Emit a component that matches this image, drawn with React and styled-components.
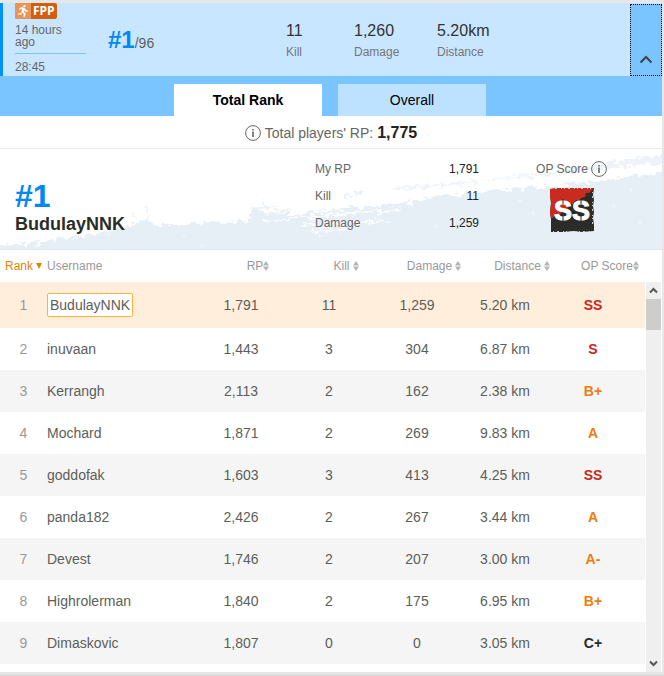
import React from 'react';
import styled, { createGlobalStyle } from 'styled-components';
import { FaRunning } from 'react-icons/fa';

const GlobalStyle = createGlobalStyle`
  * {
    box-sizing: border-box;
  }

  body {
    margin: 0;
    background-color: #e7e7e7;
    font-family: "Liberation Sans", Arial, sans-serif;
    font-size: 14px;
    color: #5c5e5a;
  }
`;

const Page = styled.main`
  padding: 3px 2px 2px 0;
  border-bottom: 2px solid #dcdcdc;
`;

const Card = styled.article`
  background-color: #fff;
`;

const Summary = styled.header`
  display: flex;
  height: 73px;
  background-color: #c8e6ff;
  border-left: 3px solid #0091ff;
`;

const MatchInfo = styled.div`
  width: 71px;
  margin-left: 12px;
  font-size: 12px;
  line-height: 12px;
  color: #666;
`;

const Mode = styled.span`
  display: inline-flex;
  height: 16px;
  border-radius: 2px;
  overflow: hidden;
  background-color: #d0600f;
  color: #fff;
  font-family: "Open Sans", sans-serif;
  font-size: 12px;
  font-weight: 700;
  line-height: 16px;
`;

const ModeIcon = styled.span`
  display: flex;
  align-items: center;
  justify-content: center;
  width: 16px;
  background-color: #e8955a;
`;

const ModeName = styled.span`
  padding: 0 2px;
`;

const Ago = styled.div`
  width: 56px;
  margin-top: 5px;
  padding-bottom: 5px;
`;

const Length = styled.div`
  padding-top: 7px;
  border-top: 1px solid #7ac4ff;
`;

const Place = styled.div`
  width: 178px;
  padding: 23px 0 0 22px;
  line-height: 28px;

  strong {
    font-size: 24px;
    color: #0088f5;
  }
`;

const Stats = styled.dl`
  display: grid;
  grid-template-columns: 68px 83px 1fr;
  flex: 1;
  margin: 0;
  padding-top: 18px;
`;

const Stat = styled.div`
  display: flex;
  flex-direction: column-reverse;
  justify-content: flex-end;
  margin-left: 22px;

  dt {
    font-size: 12px;
    line-height: 22px;
    color: #767676;
  }

  dd {
    margin: 0;
    font-size: 16px;
    line-height: 20px;
    color: #333;
  }
`;

const ToggleButton = styled.button`
  display: flex;
  align-items: flex-end;
  justify-content: center;
  width: 32px;
  margin-top: 1px;
  padding: 0 0 11px;
  border: 1px dotted #000;
  background-color: #7ac4ff;
  cursor: pointer;
`;

const Tabs = styled.div`
  display: flex;
  justify-content: center;
  gap: 16px;
  height: 40px;
  padding: 8px 2px 0 0;
  background-color: #7ac4ff;
`;

const Tab = styled.button`
  width: 148px;
  padding: 0;
  border: 0;
  background-color: ${props => props.$active ? '#fff' : '#bde2ff'};
  color: #000;
  font: inherit;
  font-weight: ${props => props.$active ? 700 : 400};
  cursor: pointer;
`;

const Total = styled.div`
  display: flex;
  align-items: center;
  justify-content: center;
  gap: 4px;
  height: 33px;
  padding-top: 2px;
  border-bottom: 1px solid #e9e9e9;
  color: #666;

  strong {
    font-size: 16px;
    color: #222;
  }
`;

const Me = styled.section`
  position: relative;
  display: flex;
  height: 101px;
  border-bottom: 1px solid #e2e6ea;
`;

const Brush = styled.svg`
  position: absolute;
  inset: 0;
  width: 100%;
  height: 100%;
`;

const MyName = styled.div`
  position: relative;
  flex: 1;
  padding: 29px 0 0 15px;
  font-weight: 700;
`;

const MyRank = styled.div`
  font-size: 32px;
  line-height: 36px;
  color: #0088f5;
`;

const MyUser = styled.div`
  font-size: 18px;
  line-height: 20px;
  color: #2b2d28;
`;

const MyStats = styled.dl`
  position: relative;
  width: 164px;
  margin: 0;
  padding-top: 7px;
  font-size: 12px;
  line-height: 27px;

  div {
    display: flex;
    justify-content: space-between;
  }

  dt {
    color: #666;
  }

  dd {
    margin: 0;
    color: #222;
  }
`;

const MyScore = styled.div`
  position: relative;
  width: 183px;
  padding: 11px 0 0 2px;
  font-size: 12px;
  color: #666;
  text-align: center;

  > svg {
    margin-top: 9px;
  }
`;

const ScoreLabel = styled.div`
  display: flex;
  align-items: center;
  justify-content: center;
  gap: 3px;
  height: 18px;
`;

const Table = styled.table`
  width: 100%;
  table-layout: fixed;
  border-collapse: collapse;
  text-align: center;

  th,
  td {
    padding: 0;
  }

  th:nth-child(1),
  td:nth-child(1) {
    width: 47px;
  }

  th:nth-child(2),
  td:nth-child(2) {
    text-align: left;
  }

  th:nth-child(n + 3),
  td:nth-child(n + 3) {
    width: 88px;
  }

  th:last-child,
  td:last-child {
    width: 96px;
    padding-right: 8px;
  }
`;

const HeadRow = styled.tr`
  height: 32px;
`;

const Heading = styled.th`
  font-size: 12px;
  font-weight: 400;
  color: ${props => props.$active ? '#e08600' : '#999'};
`;

const SortButton = styled.button`
  display: inline-flex;
  align-items: center;
  gap: ${props => props.$tight ? 0 : 3}px;
  padding: 0;
  border: 0;
  background: none;
  color: inherit;
  font: inherit;
  cursor: pointer;
`;

const List = styled.div`
  display: grid;
  grid-template-columns: 1fr 15px;
  gap: 1px;
  padding-right: 1px;
`;

const Rows = styled.div`
  padding-bottom: 8px;
`;

const Row = styled.tr`
  height: ${props => props.$mine ? 46 : 42}px;
  background-color: #fff;

  &:nth-child(odd) {
    background-color: ${props => props.$mine ? '#ffeedb' : '#f5f5f5'};
  }
`;

const RankCell = styled.td`
  color: #999;
`;

const User = styled.a`
  color: inherit;
  text-decoration: none;
  ${props => props.$mine && `
    display: inline-block;
    padding: 3px 2px;
    border: 1px solid #ffb13d;
    border-radius: 2px;
    background-color: #fff;
  `}
`;

const gradeColors = { S: '#c8271d', A: '#ee7d0b', B: '#ee7d0b', C: '#2b2b2b' };

const Grade = styled.td`
  font-weight: 700;
  color: ${props => gradeColors[props.$grade[0]]};
`;

const Scrollbar = styled.div`
  display: flex;
  flex-direction: column;
  background-color: #efefef;
`;

const ScrollButton = styled.button`
  display: flex;
  align-items: center;
  justify-content: center;
  height: 17px;
  padding: 0;
  border: 0;
  background: none;
`;

const Thumb = styled.div`
  height: 31px;
  margin-bottom: auto;
  background-color: #cdcdcd;
`;

const players = [
  { name: 'BudulayNNK', rp: '1,791', kill: 11, damage: '1,259', distance: '5.20', grade: 'SS', mine: true },
  { name: 'inuvaan', rp: '1,443', kill: 3, damage: '304', distance: '6.87', grade: 'S' },
  { name: 'Kerrangh', rp: '2,113', kill: 2, damage: '162', distance: '2.38', grade: 'B+' },
  { name: 'Mochard', rp: '1,871', kill: 2, damage: '269', distance: '9.83', grade: 'A' },
  { name: 'goddofak', rp: '1,603', kill: 3, damage: '413', distance: '4.25', grade: 'SS' },
  { name: 'panda182', rp: '2,426', kill: 2, damage: '267', distance: '3.44', grade: 'A' },
  { name: 'Devest', rp: '1,746', kill: 2, damage: '207', distance: '3.00', grade: 'A-' },
  { name: 'Highrolerman', rp: '1,840', kill: 2, damage: '175', distance: '6.95', grade: 'B+' },
  { name: 'Dimaskovic', rp: '1,807', kill: 0, damage: '0', distance: '3.05', grade: 'C+' },
];

const columns = [
  { label: 'RP', tight: true },
  { label: 'Kill' },
  { label: 'Damage' },
  { label: 'Distance' },
  { label: 'OP Score', tight: true },
];

function InfoIcon() {
  return (
    <svg width="16" height="16" viewBox="0 0 16 16" fill="none" stroke="#666">
      <circle cx="8" cy="8" r="7.4" />
      <path d="M8 6.5V12M8 4V5.5" strokeWidth="1.6" />
    </svg>
  );
}

function SortIcon() {
  return (
    <svg width="6" height="10" viewBox="0 0 6 10" fill="#b5b5b5">
      <path d="M3 0L6 4.6H0ZM3 10L0 5.4H6Z" />
    </svg>
  );
}

function Arrow({ down }) {
  return (
    <svg width="9" height="7" viewBox="0 0 9 7" fill="none" stroke="#555" strokeWidth="2">
      <path d={down ? 'M1 1.5L4.5 5L8 1.5' : 'M1 5.5L4.5 2L8 5.5'} />
    </svg>
  );
}

function BrushStroke() {
  return (
    <Brush viewBox="0 0 662 100" preserveAspectRatio="none" aria-hidden="true">
      <defs>
        <filter id="torn" x="-5%" y="-20%" width="110%" height="140%">
          <feTurbulence type="fractalNoise" baseFrequency="0.14 0.22" numOctaves="4" seed="4" />
          <feDisplacementMap in="SourceGraphic" scale="12" xChannelSelector="R" yChannelSelector="G" />
        </filter>
        <clipPath id="panel">
          <rect width="662" height="100" />
        </clipPath>
      </defs>
      <g clipPath="url(#panel)">
        <g filter="url(#torn)">
          <path
            fill="#e6eef6"
            d="M-20 97L30 95L50 91L70 89L100 84L120 80L138 74L147 67L152 77L180 75L210 73L225 74L250 71L254 58
              L262 66L290 65L330 62L345 59L400 55L430 49L480 42L560 37L620 29L690 20V130H-20Z"
          />
          <path
            fill="#edf3f9"
            d="M385 40L400 38L440 35L480 31L520 27L560 22L610 13L690 2V11L620 18L560 25L500 30L440 38L400 41Z"
          />
          <path
            fill="none"
            stroke="#e9f0f8"
            strokeWidth="2"
            d="M132 64L136 70M145 60L149 70M252 60L276 57M264 53V58M345 47L362 45M250 67L290 61"
          />
          <path
            fill="none"
            stroke="#fff"
            strokeWidth="2"
            d="M262 72L300 69M290 69L345 66M300 76L390 72M330 65L400 61M310 82L350 80"
          />
        </g>
        <g fill="#f1f6fb">
          <circle cx="320" cy="87" r="1.6" />
          <circle cx="520" cy="52" r="1.6" />
          <circle cx="533" cy="64" r="1.6" />
          <circle cx="436" cy="77" r="1.6" />
          <circle cx="614" cy="57" r="1.6" />
          <circle cx="631" cy="41" r="1.6" />
          <circle cx="640" cy="73" r="1.6" />
          <circle cx="184" cy="86" r="1.6" />
          <circle cx="202" cy="97" r="1.6" />
          <circle cx="36" cy="97" r="1.6" />
        </g>
      </g>
    </Brush>
  );
}

function ScoreBadge() {
  return (
    <svg width="46" height="46" viewBox="0 0 46 46">
      <path
        fill="#2b2c28"
        d="M1 2L10 1L26 1L45 1L44 8L45 13L44 19L45 25L44 31L45 38L45 44L32 45L25 44L14 45L8 45L2 45L2 32L1 26L2 16L1 8Z"
      />
      <path
        fill="#c92c1e"
        d="M1 2L10 1L26 1L44 1L43 3L40 6L37 6L36 10L32 11L30 14L27 13L24 17L20 17L19 22L14 22L12 27L7 27L4 31L2 31L1 26
          L2 16L1 8Z"
      />
      <text
        x="23"
        y="33"
        textAnchor="middle"
        fill="#fff"
        stroke="#fff"
        fontFamily="Liberation Sans, Arial, sans-serif"
        fontSize="27"
        fontWeight="700"
      >
        SS
      </text>
      <path stroke="#2b2c28" d="M14 12V17M14 29V35M32 12V17M32 29V35" />
      <path
        fill="none"
        stroke="#c4c8c8"
        strokeDasharray="1 3 2 4 1 2"
        d="M43.5 5V40M4 44.5H42M2 1.5H42"
      />
    </svg>
  );
}

export default function App() {
  return (
    <>
      <GlobalStyle />
      <Page>
        <Card>
          <Summary>
            <MatchInfo>
              <Mode>
                <ModeIcon>
                  <FaRunning size={12} />
                </ModeIcon>
                <ModeName>FPP</ModeName>
              </Mode>
              <Ago>14 hours ago</Ago>
              <Length>28:45</Length>
            </MatchInfo>
            <Place>
              <strong>#1</strong>/96
            </Place>
            <Stats>
              <Stat>
                <dt>Kill</dt>
                <dd>11</dd>
              </Stat>
              <Stat>
                <dt>Damage</dt>
                <dd>1,260</dd>
              </Stat>
              <Stat>
                <dt>Distance</dt>
                <dd>5.20km</dd>
              </Stat>
            </Stats>
            <ToggleButton type="button" aria-label="Close details">
              <svg width="14" height="9" viewBox="0 0 14 9" fill="none" stroke="#3d4347" strokeWidth="2">
                <path d="M1.5 7.5L7 2L12.5 7.5" />
              </svg>
            </ToggleButton>
          </Summary>

          <Tabs role="tablist">
            <Tab type="button" role="tab" aria-selected="true" $active>Total Rank</Tab>
            <Tab type="button" role="tab" aria-selected="false">Overall</Tab>
          </Tabs>

          <Total>
            <InfoIcon />
            <span>Total players' RP:</span>
            <strong>1,775</strong>
          </Total>

          <Me>
            <BrushStroke />
            <MyName>
              <MyRank>#1</MyRank>
              <MyUser>BudulayNNK</MyUser>
            </MyName>
            <MyStats>
              <div>
                <dt>My RP</dt>
                <dd>1,791</dd>
              </div>
              <div>
                <dt>Kill</dt>
                <dd>11</dd>
              </div>
              <div>
                <dt>Damage</dt>
                <dd>1,259</dd>
              </div>
            </MyStats>
            <MyScore>
              <ScoreLabel>
                OP Score
                <InfoIcon />
              </ScoreLabel>
              <ScoreBadge />
            </MyScore>
          </Me>

          <Table>
            <thead>
              <HeadRow>
                <Heading $active>
                  <SortButton type="button">
                    Rank
                    <svg width="6" height="6" viewBox="0 0 6 6" fill="#e08600">
                      <path d="M0 0H6L3 6Z" />
                    </svg>
                  </SortButton>
                </Heading>
                <Heading>Username</Heading>
                {columns.map(col => (
                  <Heading key={col.label}>
                    <SortButton type="button" $tight={col.tight}>
                      {col.label}
                      <SortIcon />
                    </SortButton>
                  </Heading>
                ))}
              </HeadRow>
            </thead>
          </Table>

          <List>
            <Rows>
              <Table>
                <tbody>
                  {players.map((player, idx) => (
                    <Row key={player.name} $mine={player.mine}>
                      <RankCell>{idx + 1}</RankCell>
                      <td>
                        <User href="#" $mine={player.mine}>{player.name}</User>
                      </td>
                      <td>{player.rp}</td>
                      <td>{player.kill}</td>
                      <td>{player.damage}</td>
                      <td>{player.distance} km</td>
                      <Grade $grade={player.grade}>{player.grade}</Grade>
                    </Row>
                  ))}
                </tbody>
              </Table>
            </Rows>
            <Scrollbar>
              <ScrollButton type="button" aria-label="Scroll up">
                <Arrow />
              </ScrollButton>
              <Thumb />
              <ScrollButton type="button" aria-label="Scroll down">
                <Arrow down />
              </ScrollButton>
            </Scrollbar>
          </List>
        </Card>
      </Page>
    </>
  );
}
